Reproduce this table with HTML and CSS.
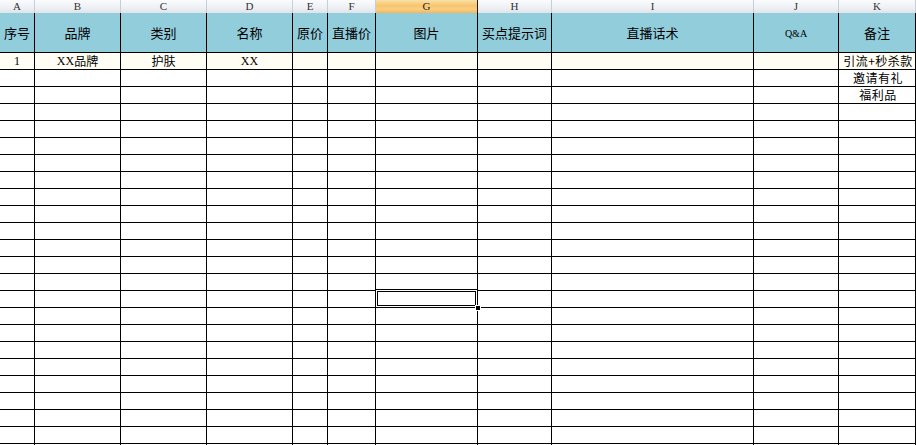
FILE: index.html
```html
<!DOCTYPE html>
<html lang="zh">
<head>
<meta charset="utf-8">
<link rel="stylesheet" href="styles.css">
</head>
<body>
<div class="sheet">
  <div class="row colbar">
    <div class="h">A</div><div class="h">B</div><div class="h">C</div><div class="h">D</div><div class="h">E</div><div class="h">F</div><div class="h sel">G</div><div class="h">H</div><div class="h">I</div><div class="h">J</div><div class="h">K</div>
  </div>
  <div class="row head">
    <div class="c">序号</div><div class="c">品牌</div><div class="c">类别</div><div class="c">名称</div><div class="c">原价</div><div class="c">直播价</div><div class="c">图片</div><div class="c">买点提示词</div><div class="c">直播话术</div><div class="c small">Q&amp;A</div><div class="c">备注</div>
  </div>
  <div class="row data first">
    <div class="c lat">1</div><div class="c"><span class="lat">XX</span>品牌</div><div class="c">护肤</div><div class="c lat">XX</div><div class="c"></div><div class="c"></div><div class="c"></div><div class="c"></div><div class="c"></div><div class="c"></div><div class="c note"><span class="t">引流+秒杀款</span></div>
  </div>
  <div class="row data"><div class="c"></div><div class="c"></div><div class="c"></div><div class="c"></div><div class="c"></div><div class="c"></div><div class="c"></div><div class="c"></div><div class="c"></div><div class="c"></div><div class="c note"><span class="t">邀请有礼</span></div></div>
  <div class="row data"><div class="c"></div><div class="c"></div><div class="c"></div><div class="c"></div><div class="c"></div><div class="c"></div><div class="c"></div><div class="c"></div><div class="c"></div><div class="c"></div><div class="c note"><span class="t">福利品</span></div></div>
  <div class="row data"><div class="c"></div><div class="c"></div><div class="c"></div><div class="c"></div><div class="c"></div><div class="c"></div><div class="c"></div><div class="c"></div><div class="c"></div><div class="c"></div><div class="c"></div></div>
  <div class="row data"><div class="c"></div><div class="c"></div><div class="c"></div><div class="c"></div><div class="c"></div><div class="c"></div><div class="c"></div><div class="c"></div><div class="c"></div><div class="c"></div><div class="c"></div></div>
  <div class="row data"><div class="c"></div><div class="c"></div><div class="c"></div><div class="c"></div><div class="c"></div><div class="c"></div><div class="c"></div><div class="c"></div><div class="c"></div><div class="c"></div><div class="c"></div></div>
  <div class="row data"><div class="c"></div><div class="c"></div><div class="c"></div><div class="c"></div><div class="c"></div><div class="c"></div><div class="c"></div><div class="c"></div><div class="c"></div><div class="c"></div><div class="c"></div></div>
  <div class="row data"><div class="c"></div><div class="c"></div><div class="c"></div><div class="c"></div><div class="c"></div><div class="c"></div><div class="c"></div><div class="c"></div><div class="c"></div><div class="c"></div><div class="c"></div></div>
  <div class="row data"><div class="c"></div><div class="c"></div><div class="c"></div><div class="c"></div><div class="c"></div><div class="c"></div><div class="c"></div><div class="c"></div><div class="c"></div><div class="c"></div><div class="c"></div></div>
  <div class="row data"><div class="c"></div><div class="c"></div><div class="c"></div><div class="c"></div><div class="c"></div><div class="c"></div><div class="c"></div><div class="c"></div><div class="c"></div><div class="c"></div><div class="c"></div></div>
  <div class="row data"><div class="c"></div><div class="c"></div><div class="c"></div><div class="c"></div><div class="c"></div><div class="c"></div><div class="c"></div><div class="c"></div><div class="c"></div><div class="c"></div><div class="c"></div></div>
  <div class="row data"><div class="c"></div><div class="c"></div><div class="c"></div><div class="c"></div><div class="c"></div><div class="c"></div><div class="c"></div><div class="c"></div><div class="c"></div><div class="c"></div><div class="c"></div></div>
  <div class="row data"><div class="c"></div><div class="c"></div><div class="c"></div><div class="c"></div><div class="c"></div><div class="c"></div><div class="c"></div><div class="c"></div><div class="c"></div><div class="c"></div><div class="c"></div></div>
  <div class="row data"><div class="c"></div><div class="c"></div><div class="c"></div><div class="c"></div><div class="c"></div><div class="c"></div><div class="c"></div><div class="c"></div><div class="c"></div><div class="c"></div><div class="c"></div></div>
  <div class="row data"><div class="c"></div><div class="c"></div><div class="c"></div><div class="c"></div><div class="c"></div><div class="c"></div><div class="c active"><span class="selbox"><span class="handle"></span></span></div><div class="c"></div><div class="c"></div><div class="c"></div><div class="c"></div></div>
  <div class="row data"><div class="c"></div><div class="c"></div><div class="c"></div><div class="c"></div><div class="c"></div><div class="c"></div><div class="c"></div><div class="c"></div><div class="c"></div><div class="c"></div><div class="c"></div></div>
  <div class="row data"><div class="c"></div><div class="c"></div><div class="c"></div><div class="c"></div><div class="c"></div><div class="c"></div><div class="c"></div><div class="c"></div><div class="c"></div><div class="c"></div><div class="c"></div></div>
  <div class="row data"><div class="c"></div><div class="c"></div><div class="c"></div><div class="c"></div><div class="c"></div><div class="c"></div><div class="c"></div><div class="c"></div><div class="c"></div><div class="c"></div><div class="c"></div></div>
  <div class="row data"><div class="c"></div><div class="c"></div><div class="c"></div><div class="c"></div><div class="c"></div><div class="c"></div><div class="c"></div><div class="c"></div><div class="c"></div><div class="c"></div><div class="c"></div></div>
  <div class="row data"><div class="c"></div><div class="c"></div><div class="c"></div><div class="c"></div><div class="c"></div><div class="c"></div><div class="c"></div><div class="c"></div><div class="c"></div><div class="c"></div><div class="c"></div></div>
  <div class="row data"><div class="c"></div><div class="c"></div><div class="c"></div><div class="c"></div><div class="c"></div><div class="c"></div><div class="c"></div><div class="c"></div><div class="c"></div><div class="c"></div><div class="c"></div></div>
  <div class="row data"><div class="c"></div><div class="c"></div><div class="c"></div><div class="c"></div><div class="c"></div><div class="c"></div><div class="c"></div><div class="c"></div><div class="c"></div><div class="c"></div><div class="c"></div></div>
  <div class="row data"><div class="c"></div><div class="c"></div><div class="c"></div><div class="c"></div><div class="c"></div><div class="c"></div><div class="c"></div><div class="c"></div><div class="c"></div><div class="c"></div><div class="c"></div></div>
  <div class="row data"><div class="c"></div><div class="c"></div><div class="c"></div><div class="c"></div><div class="c"></div><div class="c"></div><div class="c"></div><div class="c"></div><div class="c"></div><div class="c"></div><div class="c"></div></div>
</div>
</body>
</html>
```

FILE: styles.css
```css
html, body {
  margin: 0;
  padding: 0;
  background: #fff;
  overflow: hidden;
}
.sheet {
  width: 916px;
  height: 445px;
  overflow: hidden;
  font-family: "Noto Sans CJK SC", sans-serif;
  color: #000;
}
.row {
  display: grid;
  grid-template-columns: 35px 86px 86px 86px 35px 48px 102px 74px 202px 85px 1fr;
}
.colbar {
  height: 13px;
  background: linear-gradient(#fafbfd, #eef0f4 60%, #dfe3ea);
}
.colbar .h {
  box-sizing: border-box;
  border-right: 1px solid #c9ced6;
  font-family: "Liberation Serif", serif;
  font-size: 11px;
  line-height: 13px;
  text-align: center;
  color: #333;
}
.colbar .h.sel {
  background: linear-gradient(#fbe0a8, #f8c46c 45%, #f9cf86 70%, #f5b656);
  border-right-color: #1e1e1e;
  color: #222;
}
.c {
  box-sizing: border-box;
  border-right: 1px solid #000;
  border-bottom: 1px solid #000;
  display: flex;
  align-items: center;
  justify-content: center;
  white-space: nowrap;
  font-size: 12px;
}
.head {
  height: 40px;
  background: #92cddc;
}
.head .c {
  font-size: 13px;
}
.head .c.small {
  font-family: "Liberation Serif", serif;
  font-size: 10px;
  padding-top: 1px;
}
.data {
  height: 17px;
}
.data .c {
  line-height: 14px;
}
.first {
  background: #fffdf4;
}
.lat {
  font-family: "Liberation Serif", serif;
  font-size: 12px;
}
.note {
  font-size: 12px;
  overflow: visible;
  padding-left: 2px;
}
.note .t {
  display: block;
  line-height: 14px;
  height: 14px;
  letter-spacing: 0.5px;
}
.active {
  position: relative;
}
.selbox {
  position: absolute;
  left: -1px;
  top: -2px;
  right: -1px;
  bottom: -1px;
  border: 1px solid #000;
  box-shadow: inset 0 0 0 1px #fff, inset 0 0 0 2px #000;
}
.handle {
  position: absolute;
  right: -4px;
  bottom: -4px;
  width: 4px;
  height: 4px;
  background: #000;
  border: 1px solid #fff;
}
```
